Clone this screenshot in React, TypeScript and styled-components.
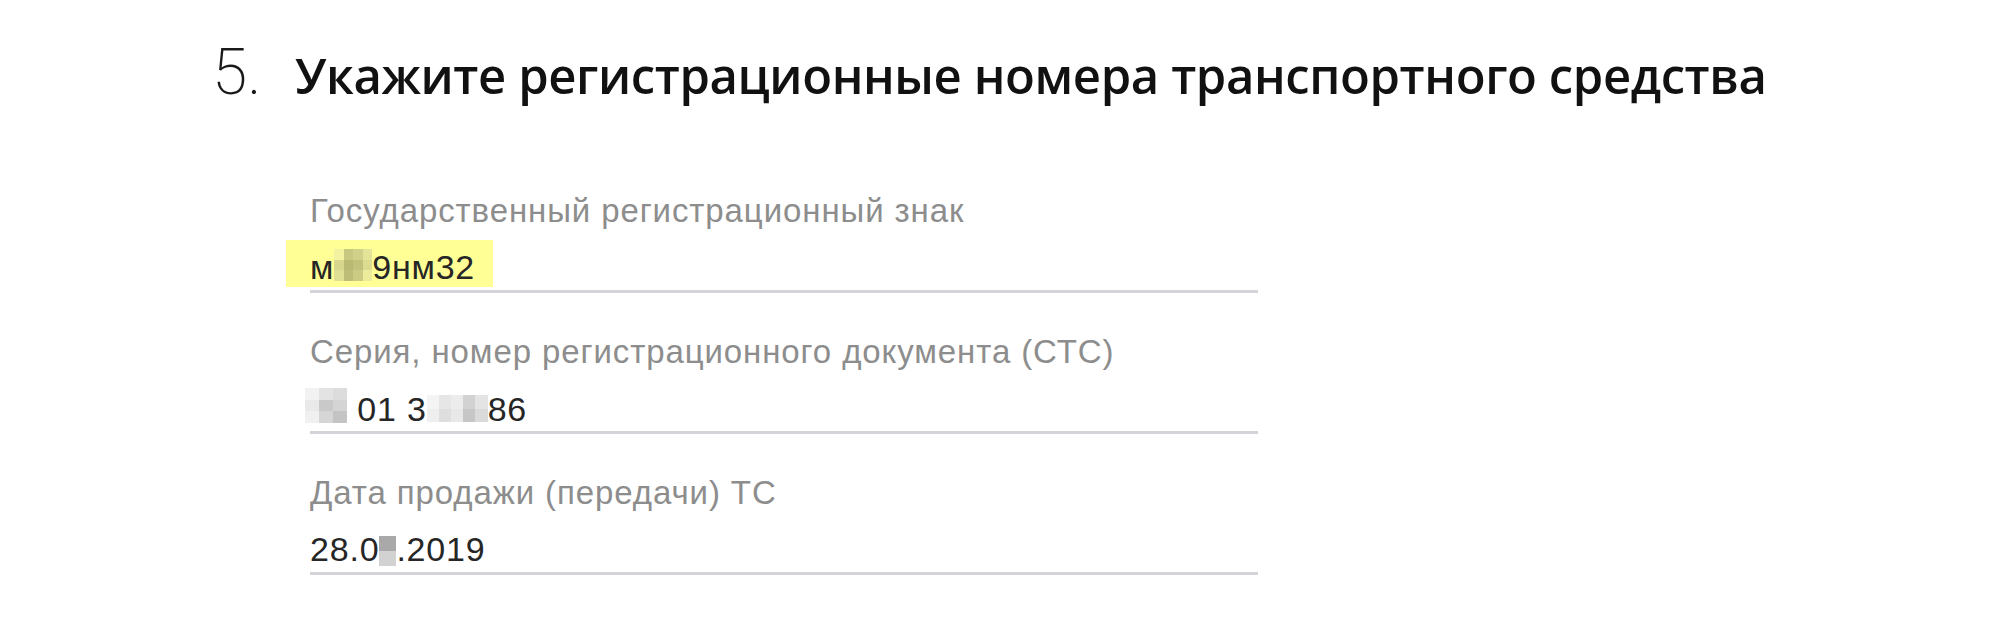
import styled, { createGlobalStyle, css } from "styled-components";

const GlobalStyle = createGlobalStyle`
  html, body {
    margin: 0;
    padding: 0;
    background: #fff;
  }
  body {
    width: 2000px;
    height: 640px;
    overflow: hidden;
  }
`;

const Page = styled.div`
  padding: 38px 0 0 212px;
`;

const Heading = styled.h2`
  display: flex;
  align-items: baseline;
  margin: 0;
  line-height: 70px;
  color: #111;
`;

const Step = styled.span`
  width: 83px;
  font-family: Roboto, "Open Sans", sans-serif;
  font-weight: 200;
  font-size: 64px;
  color: #1a1a1a;
`;

const HeadingText = styled.span`
  font-family: "Open Sans", sans-serif;
  font-weight: 600;
  font-size: 49px;
  letter-spacing: -0.4px;
`;

const Form = styled.div`
  margin: 82px 0 0 98px;
  width: 948px;
`;

const Field = styled.div`
  & + & {
    margin-top: 40px;
  }
`;

const Label = styled.div`
  font-family: "Liberation Sans", Arial, sans-serif;
  font-size: 33px;
  line-height: 38px;
  letter-spacing: 0.9px;
  color: #8d8d8d;
`;

const ValueRow = styled.div`
  margin-top: 10px;
  height: 47px;
`;

const Value = styled.span<{ $marked?: boolean }>`
  display: inline-block;
  box-sizing: border-box;
  height: 47px;
  padding-top: 7px;
  line-height: 40px;
  font-family: "Liberation Sans", Arial, sans-serif;
  font-size: 34px;
  letter-spacing: 0.8px;
  color: #262626;
  white-space: pre;
  ${(p) =>
    p.$marked &&
    css`
      margin-left: -24px;
      padding-left: 24px;
      padding-right: 18px;
      background: #ffff96;
    `}
`;

const Rule = styled.div`
  margin-top: 3px;
  height: 3px;
  background: #d2d4d7;
`;

// pixelated (redacted) part of a value
const Mosaic = styled.span<{ $w: number; $h: number; $drop?: number }>`
  display: inline-block;
  overflow: hidden;
  width: ${(p) => p.$w}px;
  height: ${(p) => p.$h}px;
  vertical-align: ${(p) => -(p.$drop ?? 2)}px;
`;

const MosaicGrid = styled.span<{ $cols: number }>`
  display: grid;
  grid-template-columns: repeat(${(p) => p.$cols}, 1fr);
  grid-auto-rows: 1fr;
  height: 100%;
`;

const Cell = styled.span<{ $c: string }>`
  background: ${(p) => p.$c};
`;

function Pixels({
  colors,
  cols,
  w,
  h,
  drop,
}: {
  colors: string[];
  cols: number;
  w: number;
  h: number;
  drop?: number;
}) {
  return (
    <Mosaic $w={w} $h={h} $drop={drop}>
      <MosaicGrid $cols={cols}>
        {colors.map((c, i) => (
          <Cell key={i} $c={c} />
        ))}
      </MosaicGrid>
    </Mosaic>
  );
}

export default function App() {
  return (
    <>
      <GlobalStyle />
      <Page>
        <Heading>
          <Step>5.</Step>
          <HeadingText>Укажите регистрационные номера транспортного средства</HeadingText>
        </Heading>
        <Form>
          <Field>
            <Label>Государственный регистрационный знак</Label>
            <ValueRow>
              <Value $marked>
                м
                <Pixels
                  cols={4}
                  w={38}
                  h={32}
                  colors={[
                    "#f2f2a0", "#c8c880", "#d0d088", "#e4e498",
                    "#d6d68c", "#b9b974", "#c2c27c", "#dcdc90",
                    "#e0e094", "#bdbd78", "#cbcb84", "#ecec9c",
                  ]}
                />
                9нм32
              </Value>
            </ValueRow>
            <Rule />
          </Field>
          <Field>
            <Label>Серия, номер регистрационного документа (СТС)</Label>
            <ValueRow>
              <Value style={{ marginLeft: -5 }}>
                <Pixels
                  cols={3}
                  w={42}
                  h={35}
                  colors={[
                    "#f2f2f2", "#e3e3e3", "#dcdcdc",
                    "#e9e9e9", "#c9c9c9", "#d4d4d4",
                    "#f0f0f0", "#d6d6d6", "#c4c4c4",
                  ]}
                />
                {" 01 3"}
                <Pixels
                  cols={5}
                  w={61}
                  h={27}
                  drop={1}
                  colors={[
                    "#f4f4f4", "#e6e6e6", "#ececec", "#d2d2d2", "#e4e4e4",
                    "#eeeeee", "#dedede", "#e8e8e8", "#c6c6c6", "#dadada",
                  ]}
                />
                86
              </Value>
            </ValueRow>
            <Rule />
          </Field>
          <Field>
            <Label>Дата продажи (передачи) ТС</Label>
            <ValueRow>
              <Value>
                28.0
                <Pixels
                  cols={1}
                  w={17}
                  h={30}
                  drop={5}
                  colors={["#a9a9a9", "#d2d2d2"]}
                />
                .2019
              </Value>
            </ValueRow>
            <Rule />
          </Field>
        </Form>
      </Page>
    </>
  );
}
